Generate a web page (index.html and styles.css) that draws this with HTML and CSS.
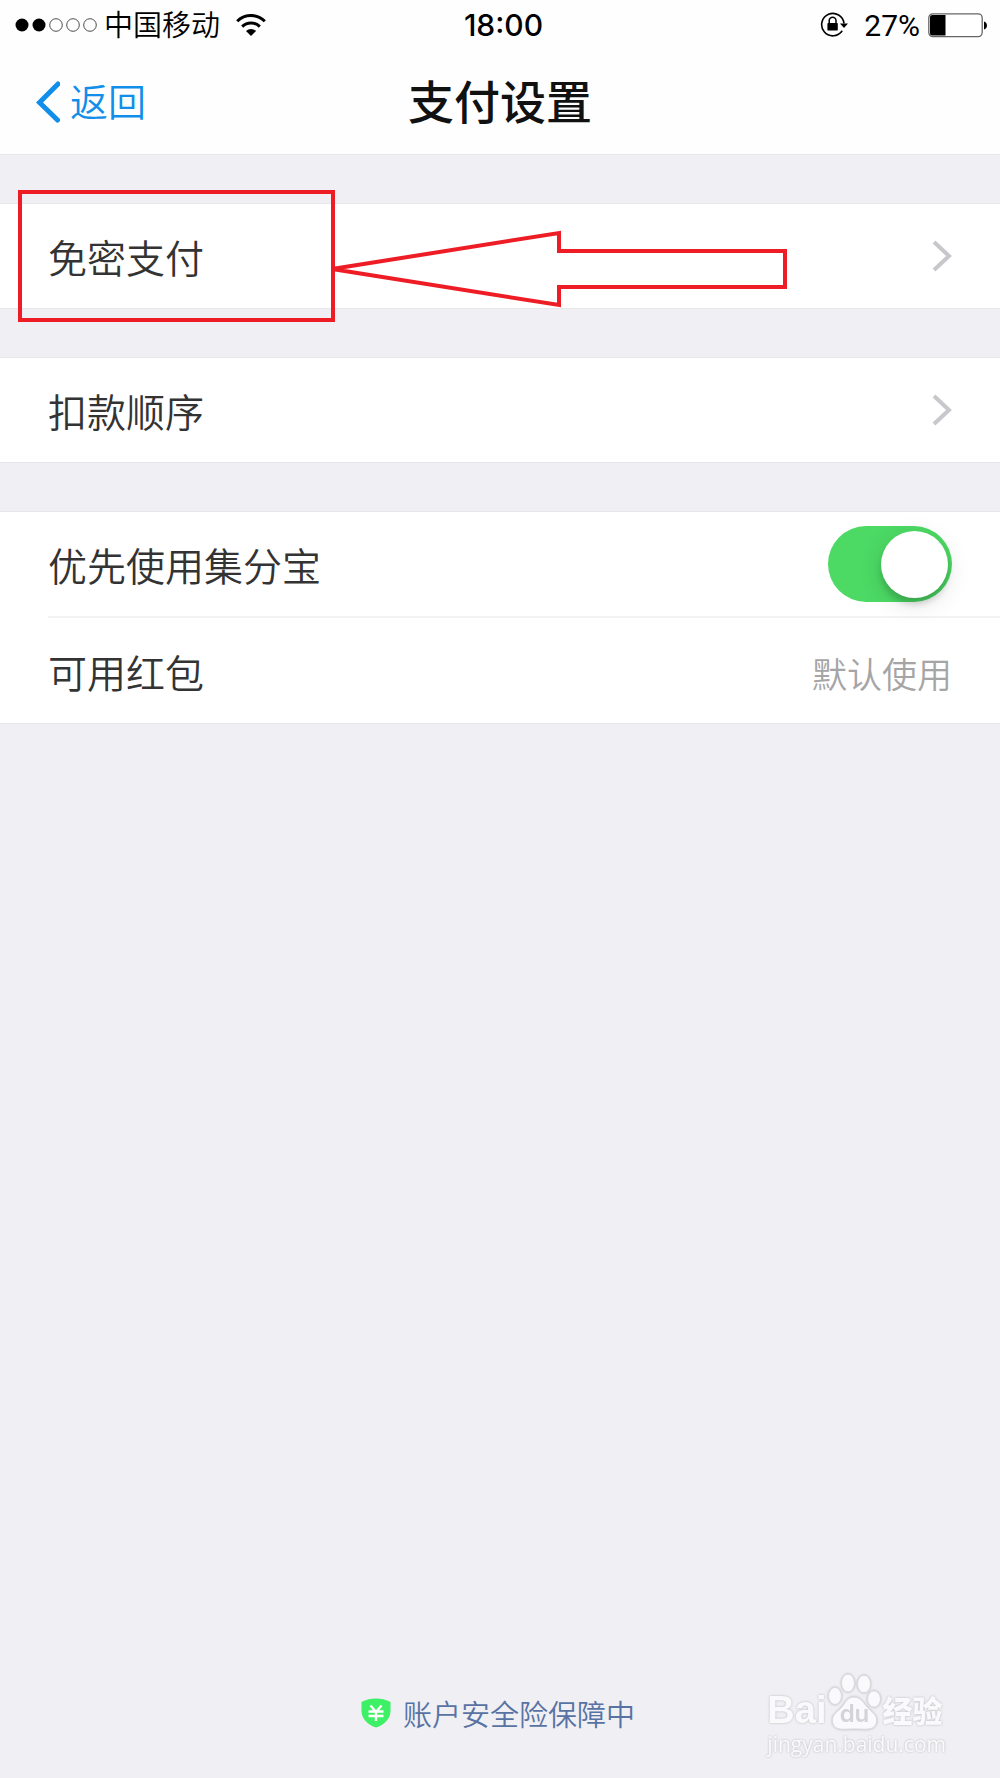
FILE: index.html
```html
<!DOCTYPE html>
<html lang="zh-CN">
<head>
<meta charset="utf-8">
<meta name="viewport" content="width=device-width, initial-scale=1">
<title>支付设置</title>
<link rel="stylesheet" href="styles.css">
</head>
<body>
<header class="header">
  <div class="status">
    <div class="status-left">
      <svg class="signal" width="82" height="14" viewBox="0 0 82 14" aria-hidden="true">
        <circle cx="7" cy="7" r="6.5"/>
        <circle cx="24" cy="7" r="6.5"/>
        <g fill="none" stroke="#222" stroke-width="0.8">
          <circle cx="41" cy="7" r="6.3"/>
          <circle cx="58" cy="7" r="6.3"/>
          <circle cx="75" cy="7" r="6.3"/>
        </g>
      </svg>
      <span class="carrier">中国移动</span>
      <svg class="wifi" width="30" height="22" viewBox="0 0 30 22" aria-hidden="true">
        <g fill="none" stroke="#000" stroke-width="3">
          <path d="M1.2 7.2a19.5 19.5 0 0 1 27.6 0"/>
          <path d="M6.2 12.6a12.5 12.5 0 0 1 17.6 0"/>
        </g>
        <path d="M15 22l-5-5a7.2 7.2 0 0 1 10 0z"/>
      </svg>
    </div>
    <time class="clock">18:00</time>
    <div class="status-right">
      <svg class="lock" width="28" height="26" viewBox="0 0 28 26" aria-hidden="true">
        <path d="M22.2 18.8A11.2 11.2 0 1 1 24 11.5" fill="none" stroke="#000" stroke-width="1.6"/>
        <path d="M20 11.5h8l-4 4.6z"/>
        <rect x="7.4" y="11" width="10.4" height="7.6" rx="0.8"/>
        <path d="M9.2 11.5V8.600a3.400 3.400 0 0 1 6.800 0v2.900" fill="none" stroke="#000" stroke-width="1.5"/>
      </svg>
      <span class="percent">27%</span>
      <svg class="battery" width="60" height="25" viewBox="0 0 60 25" aria-hidden="true">
        <rect x="0.8" y="0.8" width="53.4" height="22.8" rx="4" fill="#fff" stroke="#666" stroke-width="1.3"/>
        <path d="M4.5 2H17.5V22.5H4.5a2.5 2.5 0 0 1-2.5-2.5V4.500a2.500 2.500 0 0 1 2.500-2.500z"/>
        <path d="M56 8.500a4.200 4.200 0 0 1 0 8z"/>
      </svg>
    </div>
  </div>
  <nav class="nav">
    <a class="back" href="#">
      <svg width="24" height="42" viewBox="0 0 24 42" aria-hidden="true">
        <path d="M22 3L3.500 21.500L21.500 39" fill="none" stroke="#108ee9" stroke-width="5" stroke-linecap="round"/>
      </svg>
      <span class="back-text">返回</span>
    </a>
    <h1 class="title">支付设置</h1>
  </nav>
</header>

<main class="main">
  <section class="group group-marked">
    <a class="row" href="#">
      <span class="label">免密支付</span>
      <svg class="chevron" width="20" height="32" viewBox="0 0 20 32" aria-hidden="true"><path d="M2 2L17 16L2 30"/></svg>
    </a>
    <svg class="marker" width="772" height="136" viewBox="0 0 772 136" aria-hidden="true">
      <rect x="4" y="4" width="313" height="128"/>
      <path d="M316 81L543 45V63H769V99H543V117L316 81z"/>
    </svg>
  </section>

  <section class="group">
    <a class="row" href="#">
      <span class="label">扣款顺序</span>
      <svg class="chevron" width="20" height="32" viewBox="0 0 20 32" aria-hidden="true"><path d="M2 2L17 16L2 30"/></svg>
    </a>
  </section>

  <section class="group">
    <div class="row">
      <label class="label" for="points">优先使用集分宝</label>
      <input class="switch" type="checkbox" role="switch" id="points" checked>
    </div>
    <div class="row row-divided">
      <span class="label">可用红包</span>
      <span class="value">默认使用</span>
    </div>
  </section>
</main>

<footer class="footer">
  <a class="insurance" href="#">
    <svg width="30" height="30" viewBox="0 0 30 30" aria-hidden="true">
      <path d="M15 0.500C20 0.500 25 1.500 29.500 4V13C29.500 21 23 27 15 29.500C7 27 0.500 21 0.500 13V4C5 1.500 10 0.500 15 0.500z" fill="#3df065"/>
      <path d="M9.500 7.500L15 14L20.500 7.500M7.500 13.500H22.500M7.500 18H22.500M15 13.500V23" fill="none" stroke="#fff" stroke-width="2.400"/>
    </svg>
    <span>账户安全险保障中</span>
  </a>
  <div class="watermark">
    <div class="brand">
      <span class="brand-latin">Bai</span>
      <span class="paw">
        <svg width="56" height="60" viewBox="0 0 56 60" aria-hidden="true">
          <ellipse cx="9" cy="24" rx="6.500" ry="8.500"/>
          <ellipse cx="22" cy="11" rx="6.500" ry="9"/>
          <ellipse cx="38" cy="12" rx="6.500" ry="8.800"/>
          <ellipse cx="48" cy="27" rx="6.500" ry="8.200"/>
          <path d="M28 25C36 25 38 33 44 38C50 43 52 47 50 52C47 59 39 57 28 57C17 57 10 59 7 52C5 46 8 42 13 38C19 33 20 25 28 25z"/>
        </svg>
        <span class="paw-text">du</span>
      </span>
      <span class="brand-cjk">经验</span>
    </div>
    <div class="site">jingyan.baidu.com</div>
  </div>
</footer>
</body>
</html>
```
FILE: styles.css
```css
* {
  box-sizing: border-box;
}

body {
  display: flex;
  flex-direction: column;
  min-height: 100vh;
  margin: 0;
  background: #efeff4;
  color: #333;
  font-family: Inter, "Noto Sans CJK SC", sans-serif;
}

a {
  color: inherit;
  text-decoration: none;
}

svg {
  display: block;
  flex: none;
}

.header {
  background: #fefefe;
  border-bottom: 1px solid #e6e6e9;
}

.status {
  display: grid;
  grid-template-columns: 1fr auto 1fr;
  align-items: center;
  height: 50px;
  padding: 0 12px 0 15px;
  color: #000;
}

.status-left,
.status-right {
  display: flex;
  align-items: center;
}

.status-right {
  justify-content: flex-end;
}

.carrier {
  margin: 0 16px 0 7px;
  padding-top: 2px;
  font-size: 29px;
  font-weight: 350;
  line-height: 48px;
}

.clock {
  padding-left: 4px;
  font-size: 30px;
  font-weight: 500;
}

.percent {
  margin: 0 8px 0 16px;
  font-family: Roboto, sans-serif;
  font-size: 30px;
}

.nav {
  display: grid;
  grid-template-columns: 1fr auto 1fr;
  align-items: center;
  height: 104px;
  padding: 0 36px;
}

.back {
  display: flex;
  align-items: center;
  gap: 10px;
  color: #108ee9;
  font-size: 38px;
  font-weight: 350;
}

.back-text,
.title {
  padding-bottom: 6px;
}

.title {
  margin: 0;
  color: #111;
  font-size: 46px;
  font-weight: 500;
}

.main {
  display: flex;
  flex-direction: column;
  gap: 48px;
  padding-top: 48px;
}

.group {
  background: #fff;
  border: solid #e7e7ea;
  border-width: 1px 0;
}

.group-marked {
  position: relative;
}

.row {
  display: flex;
  align-items: center;
  justify-content: space-between;
  height: 104px;
  padding: 0 48px;
}

.row-divided {
  height: 107px;
  margin-left: 48px;
  padding-left: 0;
  border-top: 2px solid #f3f3f5;
}

.label {
  font-size: 39px;
  font-weight: 350;
}

.value {
  padding-top: 4px;
  color: #a5a5a5;
  font-size: 35px;
  font-weight: 350;
}

.chevron {
  fill: none;
  stroke: #c7c7cc;
  stroke-width: 4;
}

.marker {
  position: absolute;
  top: -16px;
  left: 16px;
  fill: none;
  stroke: #ee1c24;
  stroke-width: 4;
  pointer-events: none;
}

.switch {
  appearance: none;
  display: flex;
  align-items: center;
  width: 124px;
  height: 76px;
  margin: 0;
  padding: 4px;
  border-radius: 38px;
  background: #4cd964;
}

.switch::before {
  content: "";
  width: 67px;
  height: 67px;
  border-radius: 50%;
  background: #fff;
  box-shadow: 0 6px 6px rgba(0, 0, 0, 0.16), 0 6px 24px rgba(0, 0, 0, 0.12);
}

.switch:checked {
  justify-content: flex-end;
}

.footer {
  position: relative;
  display: flex;
  justify-content: center;
  margin-top: auto;
  padding: 0 4px 44px 0;
}

.insurance {
  display: flex;
  align-items: center;
  gap: 12px;
  color: #5873a3;
  font-size: 29px;
  font-weight: 350;
}

.watermark {
  position: absolute;
  right: 54px;
  bottom: 22px;
  color: #fafafc;
  fill: #fafafc;
  stroke: #d9d9de;
  filter: drop-shadow(0 0 1px #bbb);
}

.brand {
  display: flex;
  align-items: flex-end;
}

.brand-latin {
  font-family: "Liberation Sans", sans-serif;
  font-size: 38px;
  font-weight: 700;
  line-height: 44px;
}

.brand-cjk {
  font-size: 30px;
  font-weight: 900;
  line-height: 42px;
}

.paw {
  display: grid;
  align-items: end;
  justify-items: center;
}

.paw svg,
.paw-text {
  grid-area: 1 / 1;
}

.paw-text {
  color: #d3d3d8;
  font-size: 24px;
  font-weight: 600;
  line-height: 36px;
}

.site {
  font-family: "Open Sans", sans-serif;
  font-size: 21px;
  line-height: 24px;
}
```
